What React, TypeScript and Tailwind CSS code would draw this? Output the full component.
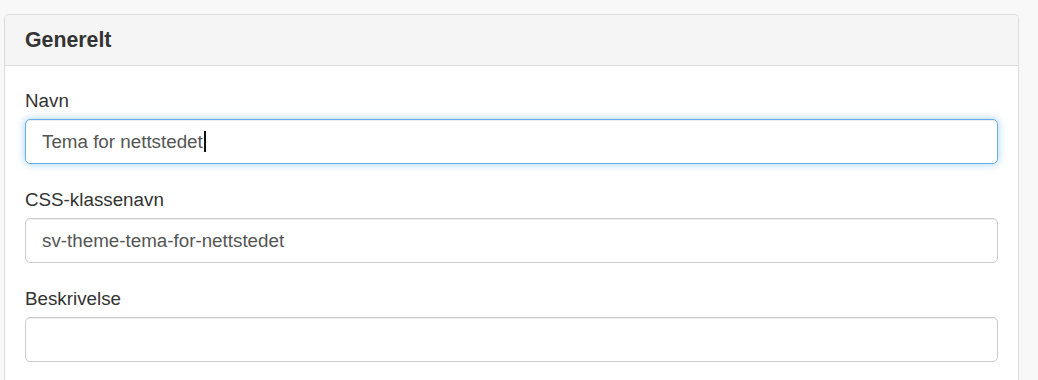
const font = { fontFamily: '"Liberation Sans", Arial, Helvetica, sans-serif' }

function Field({ label, value, focused, caret }: { label: string; value?: string; focused?: boolean; caret?: boolean }) {
  return (
    <div className="mb-[23px]">
      <div className="mb-[5px] text-[18.8px] leading-[26px] text-[#333]">{label}</div>
      <div
        className={
          focused
            ? 'flex h-[45px] items-center rounded-[5px] border border-[#66afe9] bg-white px-4 text-[18.8px] text-[#555] shadow-[inset_0_1px_1px_rgba(0,0,0,0.075),0_0_8px_rgba(102,175,233,0.6)]'
            : 'flex h-[45px] items-center rounded-[5px] border border-[#ccc] bg-white px-4 text-[18.8px] text-[#555] shadow-[inset_0_1px_1px_rgba(0,0,0,0.075)]'
        }
      >
        <span className="leading-[22px]">{value}</span>
        {caret && <span className="ml-[1px] inline-block h-[21px] w-[2px] bg-[#111]" />}
      </div>
    </div>
  )
}

export default function App() {
  return (
    <div className="min-h-[380px] bg-[#f8f8f8] pl-[4px] pr-[19px] pt-[14px]" style={font}>
      <div className="h-[366px] overflow-hidden rounded-t-[5px] border border-b-0 border-[#ddd] bg-white">
        <div className="border-b border-[#ddd] bg-[#f5f5f5] px-5 py-[13px]">
          <h2 className="text-[21.3px] font-bold leading-[24px] text-[#333]">Generelt</h2>
        </div>
        <div className="px-5 pt-[22px]">
          <Field label="Navn" value="Tema for nettstedet" focused caret />
          <Field label="CSS-klassenavn" value="sv-theme-tema-for-nettstedet" />
          <Field label="Beskrivelse" />
        </div>
      </div>
    </div>
  )
}
